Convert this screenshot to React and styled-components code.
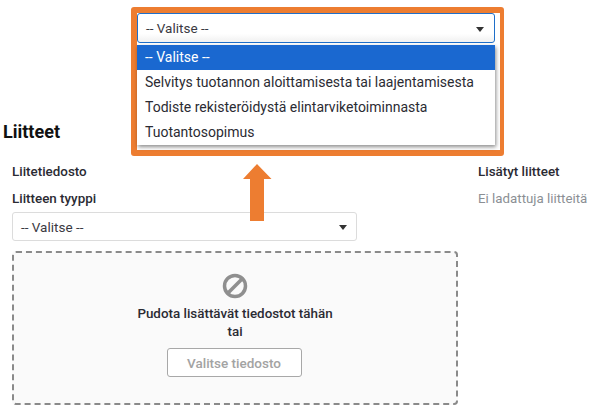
import React from "react";
import styled, { createGlobalStyle } from "styled-components";

const GlobalStyle = createGlobalStyle`
  html, body {
    margin: 0;
    padding: 0;
    background: #fff;
  }
  body {
    font-family: Roboto, "Liberation Sans", sans-serif;
    color: #2b2b33;
  }
`;

const Page = styled.div`
  position: relative;
  width: 607px;
  height: 418px;
  overflow: hidden;
  padding: 121px 0 0 3px;
  box-sizing: border-box;
`;

const Heading = styled.h2`
  margin: 0 0 22px;
  font-size: 18px;
  line-height: 21px;
  font-weight: 700;
  color: #111;
`;

const Columns = styled.div`
  display: grid;
  grid-template-columns: 446px auto;
  column-gap: 20px;
  padding-left: 9px;
`;

const Column = styled.div`
  display: flex;
  flex-direction: column;
`;

const Label = styled.div`
  font-size: 13.4px;
  line-height: 15px;
  font-weight: 500;
  color: #2b2b33;
  margin-bottom: ${(p) => p.$gap || 0}px;
`;

const Muted = styled.div`
  font-size: 13.3px;
  line-height: 15px;
  color: #8b8f94;
`;

const SelectBox = styled.div`
  display: flex;
  align-items: center;
  justify-content: space-between;
  box-sizing: border-box;
  width: ${(p) => p.$width};
  height: ${(p) => p.$height}px;
  padding: 0 8px;
  font-size: 13.5px;
  color: #3a3a42;
  background: ${(p) => (p.$open ? "linear-gradient(#fff 70%, #f1f1f1)" : "#fff")};
  border: 1px solid ${(p) => (p.$open ? "#1f6fc9" : "#dcdcdc")};
  border-radius: 3px;
`;

const Caret = styled.span`
  width: 0;
  height: 0;
  margin-right: ${(p) => (p.$open ? 2 : 1)}px;
  margin-top: 2px;
  border-left: 4px solid transparent;
  border-right: 4px solid transparent;
  border-top: 5px solid #333;
`;

const DropZone = styled.div`
  display: flex;
  flex-direction: column;
  align-items: center;
  box-sizing: border-box;
  height: 154px;
  margin-top: 10px;
  padding-top: 20px;
  background: #fafafa;
  border: 2px dashed #8a8a8a;
  border-radius: 4px;
`;

const DropText = styled.div`
  margin-top: 6px;
  width: 205px;
  text-align: center;
  font-size: 13.4px;
  line-height: 18px;
  font-weight: 500;
  color: #2b2b33;
`;

const PickButton = styled.div`
  display: flex;
  align-items: center;
  justify-content: center;
  box-sizing: border-box;
  width: 135px;
  height: 29px;
  margin: 7px 2px 0 0;
  font-size: 13.5px;
  font-weight: 500;
  color: #a3a3a3;
  background: #fff;
  border: 1px solid #a8a8a8;
  border-radius: 3px;
`;

const Callout = styled.div`
  position: absolute;
  left: 131px;
  top: 7px;
  box-sizing: border-box;
  width: 373px;
  height: 149px;
  padding-right: 5px;
  background: #fff;
  border: 6px solid #ed7d31;
  border-right-width: 4px;
  border-radius: 3px;
`;

const Menu = styled.div`
  margin-top: 2px;
  background: #fff;
  box-shadow: 1px 2px 4px rgba(0, 0, 0, 0.45);
`;

const Option = styled.div`
  height: 25px;
  line-height: 25px;
  padding-left: 8px;
  font-size: 14px;
  color: ${(p) => (p.$active ? "#fff" : "#2b2b33")};
  background: ${(p) => (p.$active ? "#1a68d0" : "#fff")};
`;

const ArrowMark = styled.svg`
  position: absolute;
  left: 243px;
  top: 164px;
`;

const OPTIONS = [
  "-- Valitse --",
  "Selvitys tuotannon aloittamisesta tai laajentamisesta",
  "Todiste rekisteröidystä elintarviketoiminnasta",
  "Tuotantosopimus",
];

const App = () => {
  return (
    <>
      <GlobalStyle />
      <Page>
        <Heading>Liitteet</Heading>
        <Columns>
          <Column>
            <Label $gap={12}>Liitetiedosto</Label>
            <Label $gap={6}>Liitteen tyyppi</Label>
            <SelectBox $width="345px" $height={29}>
              -- Valitse --
              <Caret />
            </SelectBox>
            <DropZone>
              <svg width="26" height="26" viewBox="0 0 26 26">
                <circle cx="13" cy="13" r="10.5" fill="none" stroke="#8f8f8f" strokeWidth="3.5" />
                <line x1="20" y1="6" x2="6" y2="20" stroke="#8f8f8f" strokeWidth="3.5" />
              </svg>
              <DropText>Pudota lisättävät tiedostot tähän tai</DropText>
              <PickButton>Valitse tiedosto</PickButton>
            </DropZone>
          </Column>
          <Column>
            <Label $gap={12}>Lisätyt liitteet</Label>
            <Muted>Ei ladattuja liitteitä</Muted>
          </Column>
        </Columns>
        <Callout>
          <SelectBox $open $width="358px" $height={30}>
            -- Valitse --
            <Caret $open />
          </SelectBox>
          <Menu>
            {OPTIONS.map((text, i) => (
              <Option key={text} $active={i === 0}>
                {text}
              </Option>
            ))}
          </Menu>
        </Callout>
        <ArrowMark width="29" height="58" viewBox="0 0 29 58">
          <path d="M14 0 L28.5 15 L21 15 L21 57 L7 57 L7 15 L0 15 Z" fill="#ed7d31" />
        </ArrowMark>
      </Page>
    </>
  );
};

export default App;
